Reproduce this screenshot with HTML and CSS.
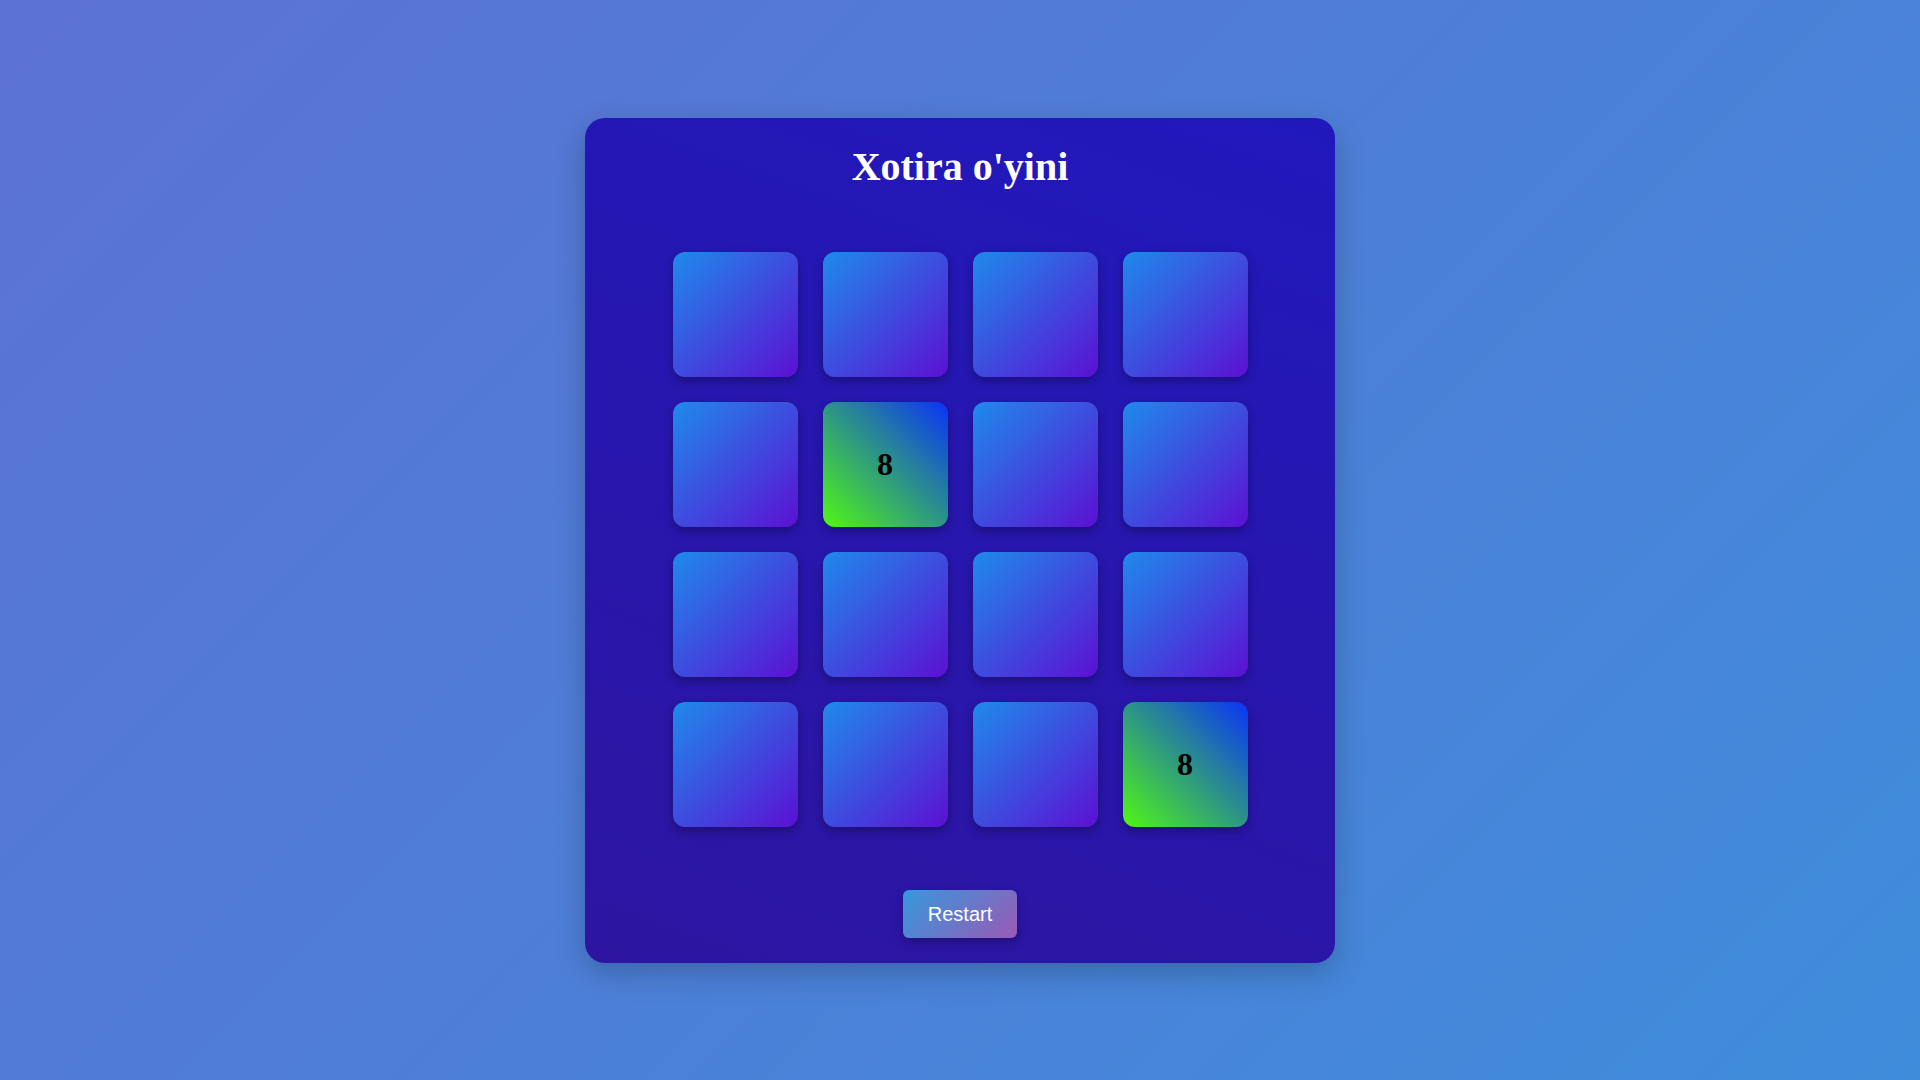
FILE: index.html
```html
<!DOCTYPE html>
<html lang="uz">
<head>
<meta charset="utf-8">
<title>Xotira o'yini</title>
<link rel="stylesheet" href="styles.css">
</head>
<body>
<main class="game">
  <h1 class="title">Xotira o'yini</h1>
  <div class="board">
    <div class="tile"></div>
    <div class="tile"></div>
    <div class="tile"></div>
    <div class="tile"></div>
    <div class="tile"></div>
    <div class="tile flipped">8</div>
    <div class="tile"></div>
    <div class="tile"></div>
    <div class="tile"></div>
    <div class="tile"></div>
    <div class="tile"></div>
    <div class="tile"></div>
    <div class="tile"></div>
    <div class="tile"></div>
    <div class="tile"></div>
    <div class="tile flipped">8</div>
  </div>
  <button class="restart">Restart</button>
</main>
</body>
</html>
```
FILE: styles.css
```css
html, body {
  margin: 0;
  height: 100%;
}
body {
  background: linear-gradient(135deg, #5c72d4 0%, #3f8cdb 100%);
  display: flex;
  justify-content: center;
  align-items: flex-start;
  font-family: "Liberation Serif", "Times New Roman", serif;
}
.game {
  margin-top: 118px;
  width: 750px;
  height: 845px;
  box-sizing: border-box;
  padding: 27px 0 25px;
  border-radius: 20px;
  background: linear-gradient(200deg, #2118bc 0%, #2d15a0 100%);
  box-shadow: 0 10px 30px rgba(0, 0, 0, 0.22);
  display: flex;
  flex-direction: column;
  align-items: center;
}
.title {
  margin: 0 0 63px;
  font-size: 40px;
  font-weight: bold;
  color: #fff;
  line-height: 44px;
}
.board {
  display: grid;
  grid-template-columns: repeat(4, 125px);
  grid-auto-rows: 125px;
  gap: 25px;
}
.tile {
  border-radius: 12px;
  background: linear-gradient(135deg, #1f8aeb 0%, #5c10d3 100%);
  box-shadow: 0 4px 10px rgba(0, 0, 0, 0.3);
  display: flex;
  align-items: center;
  justify-content: center;
  font-size: 32px;
  font-weight: bold;
  color: #000;
}
.tile.flipped {
  background: linear-gradient(45deg, #50f714 0%, #0a33f7 100%);
}
.restart {
  margin-top: 63px;
  width: 114px;
  height: 48px;
  border: none;
  border-radius: 6px;
  background: linear-gradient(135deg, #3499dd 0%, #9b59b6 100%);
  color: #fff;
  font-family: "Liberation Sans", Arial, sans-serif;
  font-size: 20px;
  padding: 0;
  box-shadow: 0 4px 10px rgba(0, 0, 0, 0.25);
  cursor: pointer;
}
```
